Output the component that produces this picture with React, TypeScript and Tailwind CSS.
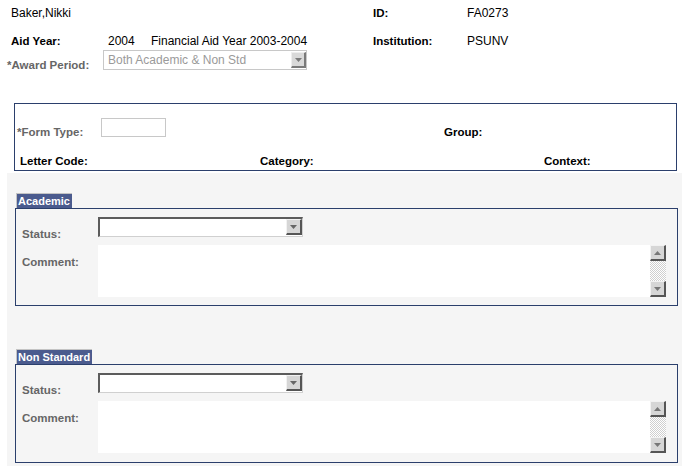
import React from 'react';

const font = "font-['Liberation_Sans',Arial,sans-serif]";
const boldLabel = 'font-bold text-[11.5px] leading-[12px] text-black';
const grayLabel = 'font-bold text-[11.5px] leading-[12px] text-[#666666]';
const value = 'text-[12px] leading-[12px] text-black';

const Arrow = ({ up = false, color = '#666666' }: { up?: boolean; color?: string }) => (
  <svg width="7" height="4" viewBox="0 0 7 4">
    {up ? <polygon points="0,4 7,4 3.5,0" fill={color} /> : <polygon points="0,0 7,0 3.5,4" fill={color} />}
  </svg>
);

const RaisedButton = ({ up = false, color }: { up?: boolean; color?: string }) => (
  <div className="w-[16px] h-[16px] bg-[#d6d6d6] border-t border-l border-t-[#f2f2f2] border-l-[#f2f2f2] border-b-2 border-r-2 border-b-[#555555] border-r-[#555555] flex items-center justify-center">
    <Arrow up={up} color={color} />
  </div>
);

const StatusSelect = () => (
  <div className="w-[205px] h-[20px] bg-white border-t-2 border-l-2 border-t-[#5c5c5c] border-l-[#5c5c5c] border-b border-r border-b-[#d0d0d0] border-r-[#d0d0d0] flex justify-end items-start">
    <RaisedButton />
  </div>
);

const CommentBox = () => (
  <div className="w-[568px] h-[52px] bg-white flex justify-end">
    <div className="w-[16px] h-full flex flex-col">
      <RaisedButton up color="#777777" />
      <div className="flex-1 bg-[repeating-conic-gradient(#cfcfcf_0_25%,#ffffff_0_50%)] bg-[length:2px_2px]" />
      <RaisedButton color="#777777" />
    </div>
  </div>
);

const Section = ({ title, top, height }: { title: string; top: string; height: string }) => (
  <div className={top}>
    <div className="ml-[9px] flex">
      <div className="h-[15px] border-t border-l border-[#c4c4c4] bg-[#4b5b8e] pl-[1px] pr-[2px] text-[11px] leading-[14px] font-bold text-white">
        {title}
      </div>
    </div>
    <div className={`ml-[8px] w-[663px] ${height} border border-[#2b3f6c]`}>
      <div className="mt-[8px] h-[20px] flex items-start">
        <div className={`w-[82px] pl-[6px] pt-[11px] ${grayLabel}`}>Status:</div>
        <StatusSelect />
      </div>
      <div className="mt-[8px] h-[52px] flex items-start">
        <div className={`w-[82px] pl-[6px] pt-[11px] ${grayLabel}`}>Comment:</div>
        <CommentBox />
      </div>
    </div>
  </div>
);

export default function App() {
  return (
    <div className={`${font} w-[691px] h-[466px] bg-white flex flex-col overflow-hidden`}>
      {/* header */}
      <div className="mt-[7px] h-[12px] pl-[11px] flex items-start">
        <div className={`w-[362px] ${value}`}>Baker,Nikki</div>
        <div className={`w-[94px] ${boldLabel}`}>ID:</div>
        <div className={value}>FA0273</div>
      </div>
      <div className="mt-[16px] h-[12px] pl-[11px] flex items-start">
        <div className={`w-[97px] ${boldLabel}`}>Aid Year:</div>
        <div className={`w-[43px] ${value}`}>2004</div>
        <div className={`w-[222px] ${value}`}>Financial Aid Year 2003-2004</div>
        <div className={`w-[94px] ${boldLabel}`}>Institution:</div>
        <div className={value}>PSUNV</div>
      </div>
      <div className="mt-[3px] h-[20px] pl-[7px] flex items-start">
        <div className={`w-[96px] pt-[9px] ${grayLabel}`}>*Award Period:</div>
        <div className="w-[204px] h-[20px] bg-white border border-[#c8c8c8] flex items-center justify-between">
          <span className="pl-[4px] text-[12px] leading-[12px] text-[#9a9a9a]">Both Academic &amp; Non Std</span>
          <div className="w-[15px] h-[16px] bg-[#d9d9d9] border-t border-l border-[#eeeeee] border-b-2 border-r-2 border-b-[#7a7a7a] border-r-[#7a7a7a] flex items-center justify-center">
            <Arrow color="#7a7a7a" />
          </div>
        </div>
      </div>

      {/* letter box */}
      <div className="mt-[33px] ml-[14px] w-[663px] h-[68px] border border-[#2b3f6c]">
        <div className="mt-[14px] h-[19px] flex items-start">
          <div className={`w-[86px] pl-[2px] pt-[8px] ${grayLabel}`}>*Form Type:</div>
          <div className="w-[65px] h-[19px] bg-white border border-[#c8c8c8]" />
          <div className={`ml-[278px] pt-[8px] ${boldLabel}`}>Group:</div>
        </div>
        <div className="mt-[18px] h-[12px] pl-[5px] flex items-start">
          <div className={`w-[240px] ${boldLabel}`}>Letter Code:</div>
          <div className={`w-[284px] ${boldLabel}`}>Category:</div>
          <div className={boldLabel}>Context:</div>
        </div>
      </div>

      {/* detail area */}
      <div className="mt-[2px] ml-[7px] w-[675px] flex-1 bg-[#f5f5f5]">
        <Section title="Academic" top="mt-[20px]" height="h-[98px]" />
        <Section title="Non Standard" top="mt-[43px]" height="h-[99px]" />
      </div>
    </div>
  );
}
